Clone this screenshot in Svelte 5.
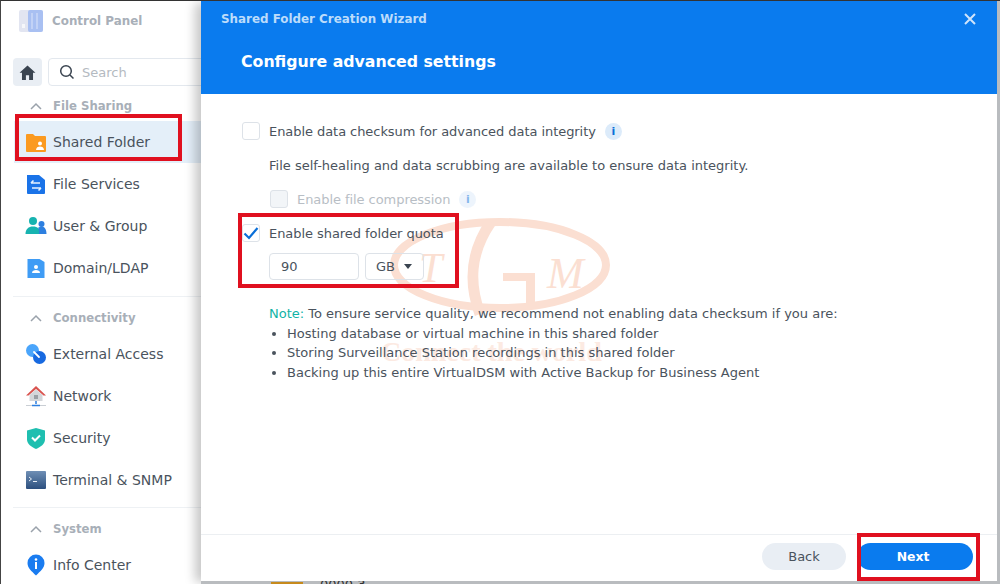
<script>
  const groups = [
    { title: 'File Sharing', items: [
      { name: 'Shared Folder', icon: 'folder', active: true },
      { name: 'File Services', icon: 'services' },
      { name: 'User & Group', icon: 'users' },
      { name: 'Domain/LDAP', icon: 'domain' }
    ] },
    { title: 'Connectivity', items: [
      { name: 'External Access', icon: 'external' },
      { name: 'Network', icon: 'network' },
      { name: 'Security', icon: 'security' },
      { name: 'Terminal & SNMP', icon: 'terminal' }
    ] },
    { title: 'System', items: [
      { name: 'Info Center', icon: 'info' }
    ] }
  ];

  const notes = [
    'Hosting database or virtual machine in this shared folder',
    'Storing Surveillance Station recordings in this shared folder',
    'Backing up this entire VirtualDSM with Active Backup for Business Agent'
  ];
</script>

{#snippet navIcon(kind)}
  <svg class="nav-icon" viewBox="0 0 22 22" width="22" height="22">
    {#if kind === 'folder'}
      <path d="M1 4a1 1 0 0 1 1-1h6l2 2h10a1 1 0 0 1 1 1V20a1 1 0 0 1-1 1H2a1 1 0 0 1-1-1z" fill="#fb9a20" />
      <circle cx="15" cy="12.500" r="2" fill="#fff" />
      <path d="M11 19c0-2.500 2-3.500 4-3.500s4 1 4 3.500z" fill="#fff" />
    {:else if kind === 'services'}
      <path d="M2 2h12l6 5v13a1 1 0 0 1-1 1H3a1 1 0 0 1-1-1z" fill="#1a73e8" />
      <path d="M6 10h9M6 10l2.500-2.500M16 15H7M16 15l-2.500 2.500" stroke="#e3f1ff" stroke-width="1.600" fill="none" />
    {:else if kind === 'users'}
      <circle cx="8" cy="6" r="4" fill="#17b3b0" />
      <path d="M0.500 19c0-5 3-7.500 7.500-7.500s7.500 2.500 7.500 7.500z" fill="#17b3b0" />
      <circle cx="16.500" cy="9" r="3" fill="#2d7fe0" />
      <path d="M14 19c0.500-3 0-5-1-6 1-1 2.500-1.500 3.500-1.500 3 0 5 2.500 5 7.500z" fill="#2d7fe0" />
    {:else if kind === 'domain'}
      <path d="M2.500 2h12l5 3v16h-17z" fill="#3f9cf5" />
      <circle cx="11" cy="10" r="2" fill="#fff" />
      <path d="M7 16c0-2.200 2-3 4-3s4 .8 4 3z" fill="#fff" />
    {:else if kind === 'external'}
      <circle cx="7.500" cy="7.500" r="6.500" fill="#4aa5fb" />
      <circle cx="14.500" cy="14.500" r="6.500" fill="#1769e0" />
      <path d="M9 9l5 5" stroke="#fff" stroke-width="1.800" stroke-linecap="round" />
    {:else if kind === 'network'}
      <path d="M11 1L1 10.500h2.500L11 4l7.500 6.500H21z" fill="#d9534f" />
      <path d="M4.500 10L11 4.500 17.500 10v6h-13z" fill="#d3d6da" />
      <rect x="9" y="10" width="4" height="4" fill="#9aa0a6" />
      <path d="M1 20.500h20" stroke="#c9ced4" stroke-width="1" />
      <path d="M11 16v3M7 20.500h8" stroke="#2d7fe0" stroke-width="1.500" />
    {:else if kind === 'security'}
      <path d="M11 1l9 2.500v9C20 17 15.500 20 11 22 6.500 20 2 17 2 12.500v-9z" fill="#1fbfb0" />
      <path d="M7 10.500l3 3 5-5" stroke="#fff" stroke-width="2" fill="none" />
    {:else if kind === 'terminal'}
      <defs>
        <linearGradient id="termFill" x1="0" y1="0" x2="0" y2="1">
          <stop offset="0" stop-color="#6f8fb5" />
          <stop offset="1" stop-color="#2c4f7e" />
        </linearGradient>
      </defs>
      <rect x="1" y="2" width="20" height="18" rx="1" fill="url(#termFill)" />
      <path d="M4 8l2.500 2L4 12M8 12.500h4" stroke="#e6edf5" stroke-width="1" fill="none" />
    {:else if kind === 'info'}
      <path d="M11 21.500C6.500 17 2.500 14 2.500 9a8.500 8.500 0 0 1 17 0c0 5-4 8-8.500 12.500z" fill="#1a7cf0" />
      <circle cx="11" cy="5.500" r="1.300" fill="#fff" />
      <rect x="10" y="8" width="2" height="7" fill="#fff" />
    {/if}
  </svg>
{/snippet}

{#snippet infoBadge()}
  <span class="info-badge">i</span>
{/snippet}

<div class="screen">
  <aside class="sidebar">
    <div class="app-title">
      <svg viewBox="0 0 24 24" width="24" height="24">
        <rect x="0" y="1" width="24" height="22" rx="2" fill="#e2e5f1" />
        <rect x="9" y="1" width="15" height="22" rx="2" fill="#a9c0f2" />
        <path d="M13 4v16M18 4v16" stroke="#dbe4fa" stroke-width="1" />
        <rect x="3" y="15" width="3" height="4" fill="#f6f7fa" />
      </svg>
      <span>Control Panel</span>
    </div>
    <div class="search-row">
      <button class="home" aria-label="Home">
        <svg viewBox="0 0 16 16" width="17" height="17"><path d="M8 1.500L0.500 8.200h2.300V15h3.700v-4.500h3V15h3.700V8.200h2.300z" fill="#3a4450" /></svg>
      </button>
      <div class="search">
        <svg viewBox="0 0 16 16" width="16" height="16"><circle cx="7" cy="7" r="5.300" fill="none" stroke="#3a4450" stroke-width="1.500" /><path d="M11 11l3.500 3.500" stroke="#3a4450" stroke-width="1.500" /></svg>
        <span>Search</span>
      </div>
    </div>

    {#each groups as group, i}
      <section class="group" class:first={i === 0} class:tight={i === 2}>
        <div class="group-title">
          <svg viewBox="0 0 12 8" width="12" height="8"><path d="M1 7l5-5 5 5" fill="none" stroke="#9aa2ab" stroke-width="1.500" /></svg>
          <span>{group.title}</span>
        </div>
        {#each group.items as item}
          <div class="nav-item" class:active={item.active}>
            {@render navIcon(item.icon)}
            <span>{item.name}</span>
          </div>
        {/each}
      </section>
    {/each}
  </aside>

  <div class="modal-area">
    <div class="modal">
      <header class="modal-head">
        <div class="head-top">
          <span>Shared Folder Creation Wizard</span>
          <svg viewBox="0 0 12 12" width="12" height="12"><path d="M1 1l10 10M11 1L1 11" stroke="#cfe4fb" stroke-width="2" /></svg>
        </div>
        <h1>Configure advanced settings</h1>
      </header>

      <div class="modal-body">
        <div class="watermark">
          <svg viewBox="0 0 240 150" width="240" height="150">
            <ellipse cx="119" cy="51" rx="106" ry="43" fill="none" stroke="#fbdfd2" stroke-width="8" />
            <path d="M110 8C88 40 88 70 99 100" fill="none" stroke="#fbdfd2" stroke-width="11" />
            <path d="M122 59h32v34h-9V67h-23z" fill="#fbdfd2" />
          </svg>
          <span class="wm-t">T</span>
          <span class="wm-m">M</span>
          <span class="wm-line">Connect the world</span>
        </div>

        <label class="check-row">
          <span class="checkbox"></span>
          <span>Enable data checksum for advanced data integrity</span>
          {@render infoBadge()}
        </label>
        <p class="hint">File self-healing and data scrubbing are available to ensure data integrity.</p>
        <label class="check-row disabled">
          <span class="checkbox"></span>
          <span>Enable file compression</span>
          {@render infoBadge()}
        </label>
        <label class="check-row quota">
          <span class="checkbox">
            <svg viewBox="0 0 16 14" width="16" height="14"><path d="M1.500 7.500l4.500 4.500 8.500-10" fill="none" stroke="#0a6fd8" stroke-width="2.200" /></svg>
          </span>
          <span>Enable shared folder quota</span>
        </label>
        <div class="quota-fields">
          <div class="field size">90</div>
          <div class="field unit">GB <i class="caret"></i></div>
        </div>

        <div class="note">
          <p><b>Note:</b> To ensure service quality, we recommend not enabling data checksum if you are:</p>
          <ul>
            {#each notes as n}
              <li>{n}</li>
            {/each}
          </ul>
        </div>
      </div>

      <footer class="modal-foot">
        <button class="btn back">Back</button>
        <button class="btn next">Next</button>
      </footer>
    </div>
    <div class="peek"><i></i><span>0000 3</span></div>
  </div>

  <div class="mark mark-folder"></div>
  <div class="mark mark-quota"></div>
  <div class="mark mark-next"></div>
</div>

<style>
  :global(body) {
    margin: 0;
    background: #fff;
  }

  .screen {
    position: relative;
    width: 1000px;
    height: 584px;
    overflow: hidden;
    display: flex;
    font-family: "DejaVu Sans", Verdana, sans-serif;
    font-size: 13px;
    color: #4a535d;
    background: #fff;
    border-top: 1px solid #333;
    border-left: 1px solid #444;
    box-sizing: border-box;
  }

  .sidebar {
    width: 200px;
    flex: none;
    overflow: hidden;
    background: #fff;
    padding-top: 8px;
    box-sizing: border-box;
  }

  .app-title {
    display: flex;
    align-items: center;
    gap: 9px;
    height: 24px;
    padding-left: 18px;
    font-size: 11.900px;
    font-weight: bold;
    color: #a8afb8;
  }

  .search-row {
    display: flex;
    gap: 6px;
    margin-top: 25px;
    padding-left: 12px;
  }

  .home {
    width: 29px;
    height: 28px;
    border: 0;
    padding: 0;
    border-radius: 4px;
    background: #e9eef4;
    display: flex;
    align-items: center;
    justify-content: center;
  }

  .search {
    flex: 1;
    height: 26px;
    margin-right: -20px;
    border: 1px solid #e3e8ee;
    border-radius: 4px;
    display: flex;
    align-items: center;
    gap: 7px;
    padding-left: 10px;
    color: #b4bac1;
  }

  .group {
    margin-top: 7px;
    border-top: 1px solid #eef1f4;
    margin-left: 12px;
    padding-top: 12px;
  }

  .group.first {
    border-top: 0;
    margin-top: 0;
    padding-top: 11px;
  }

  .group.tight {
    margin-top: 6px;
  }

  .group-title {
    display: flex;
    align-items: center;
    gap: 11px;
    height: 18px;
    margin-bottom: 6px;
    padding-left: 17px;
    font-size: 11.700px;
    font-weight: bold;
    color: #a8afb8;
  }

  .nav-item {
    display: flex;
    align-items: center;
    gap: 6px;
    height: 42px;
    margin-left: 1px;
    padding-left: 11px;
    font-size: 14px;
    color: #4a535d;
  }

  .nav-item.active {
    background: #e4eff9;
  }

  .modal-area {
    flex: 1;
    position: relative;
    background: #b9bcbf;
    box-shadow: -8px 0 10px -2px rgba(0, 0, 0, 0.22);
    padding-right: 3px;
    padding-bottom: 3px;
  }

  .modal {
    height: 100%;
    background: #fff;
    display: flex;
    flex-direction: column;
    position: relative;
    z-index: 1;
  }

  .modal-head {
    height: 93px;
    flex: none;
    box-sizing: border-box;
    background: #0a7bee;
    color: #fff;
    padding: 11px 21px 0 20px;
  }

  .head-top {
    display: flex;
    justify-content: space-between;
    align-items: center;
    font-size: 11.900px;
    font-weight: bold;
    color: #bcdcfb;
  }

  .modal-head h1 {
    margin: 26px 0 0 20px;
    font-size: 15.750px;
    font-weight: bold;
  }

  .modal-body {
    flex: 1;
    position: relative;
    padding: 24px 0 0 41px;
  }

  .check-row {
    display: flex;
    align-items: center;
    gap: 9px;
    height: 26px;
    position: relative;
    letter-spacing: -0.060px;
  }

  .checkbox {
    width: 18px;
    height: 18px;
    box-sizing: border-box;
    border: 1px solid #dde2e8;
    border-radius: 3px;
    display: flex;
    align-items: center;
    justify-content: center;
    background: #fff;
    flex: none;
  }

  .check-row.disabled {
    margin-top: 12px;
    margin-left: 28px;
    color: #b8bec5;
  }

  .check-row.disabled .checkbox {
    background: #f2f5f8;
  }

  .check-row.disabled .info-badge {
    opacity: 0.5;
  }

  .check-row.quota {
    margin-top: 8px;
  }

  .info-badge {
    width: 17px;
    height: 17px;
    border-radius: 50%;
    background: #dcebfa;
    color: #0a6fd8;
    font-size: 11px;
    font-weight: bold;
    display: inline-flex;
    align-items: center;
    justify-content: center;
  }

  .hint {
    margin: 14px 0 0 27px;
    line-height: 16px;
  }

  .quota-fields {
    display: flex;
    gap: 6px;
    margin: 7px 0 0 27px;
    position: relative;
  }

  .field {
    height: 27px;
    box-sizing: border-box;
    border: 1px solid #dde2e8;
    border-radius: 4px;
    display: flex;
    align-items: center;
    padding-left: 11px;
    color: #4a535d;
  }

  .size {
    width: 90px;
  }

  .unit {
    width: 59px;
    padding-left: 10px;
    gap: 9px;
  }

  .caret {
    width: 0;
    height: 0;
    border: 4.500px solid transparent;
    border-top: 5px solid #3a4450;
    border-bottom: 0;
  }

  .note {
    margin: 24px 0 0 27px;
    line-height: 19.600px;
    position: relative;
  }

  .note p {
    margin: 0;
  }

  .note b {
    font-weight: normal;
    color: #10b3a6;
  }

  .note ul {
    margin: 0;
    padding: 0 0 0 18px;
  }

  .watermark {
    position: absolute;
    left: 180px;
    top: 120px;
    width: 240px;
    height: 150px;
    color: #fbdfd2;
  }

  .wm-t, .wm-m, .wm-line {
    position: absolute;
    font-family: "Liberation Serif", serif;
  }

  .wm-t { left: 38px; top: 30px; font-size: 42px; font-style: italic; }
  .wm-m { left: 166px; top: 34px; font-size: 44px; font-style: italic; }
  .wm-line {
    left: 0;
    top: 122px;
    font-size: 28px;
    font-weight: bold;
    white-space: nowrap;
    color: #fceae2;
  }

  .modal-foot {
    height: 47px;
    flex: none;
    box-sizing: border-box;
    border-top: 1px solid #eceff2;
    display: flex;
    justify-content: flex-end;
    align-items: center;
    gap: 11px;
    padding: 0 24px 3px 0;
  }

  .btn {
    height: 27px;
    border: 0;
    border-radius: 14px;
    font-family: inherit;
    font-size: 13px;
    padding: 0;
  }

  .back {
    width: 84px;
    background: #e9eef4;
    color: #4a535d;
  }

  .next {
    width: 116px;
    padding-right: 4px;
    background: #0a7bee;
    color: #fff;
    font-weight: bold;
    font-size: 12.400px;
  }

  .peek {
    position: absolute;
    left: 70px;
    bottom: -8px;
    display: flex;
    gap: 17px;
    align-items: flex-end;
    color: #333;
  }

  .peek i {
    width: 32px;
    height: 10px;
    background: #c68a1c;
  }

  .mark {
    position: absolute;
    border: 4px solid #e0101f;
    box-sizing: border-box;
    z-index: 2;
  }

  .mark-folder { left: 14px; top: 113px; width: 167px; height: 47px; }
  .mark-quota { left: 237px; top: 212px; width: 221px; height: 75px; }
  .mark-next { left: 856px; top: 532px; width: 123px; height: 48px; }
</style>
